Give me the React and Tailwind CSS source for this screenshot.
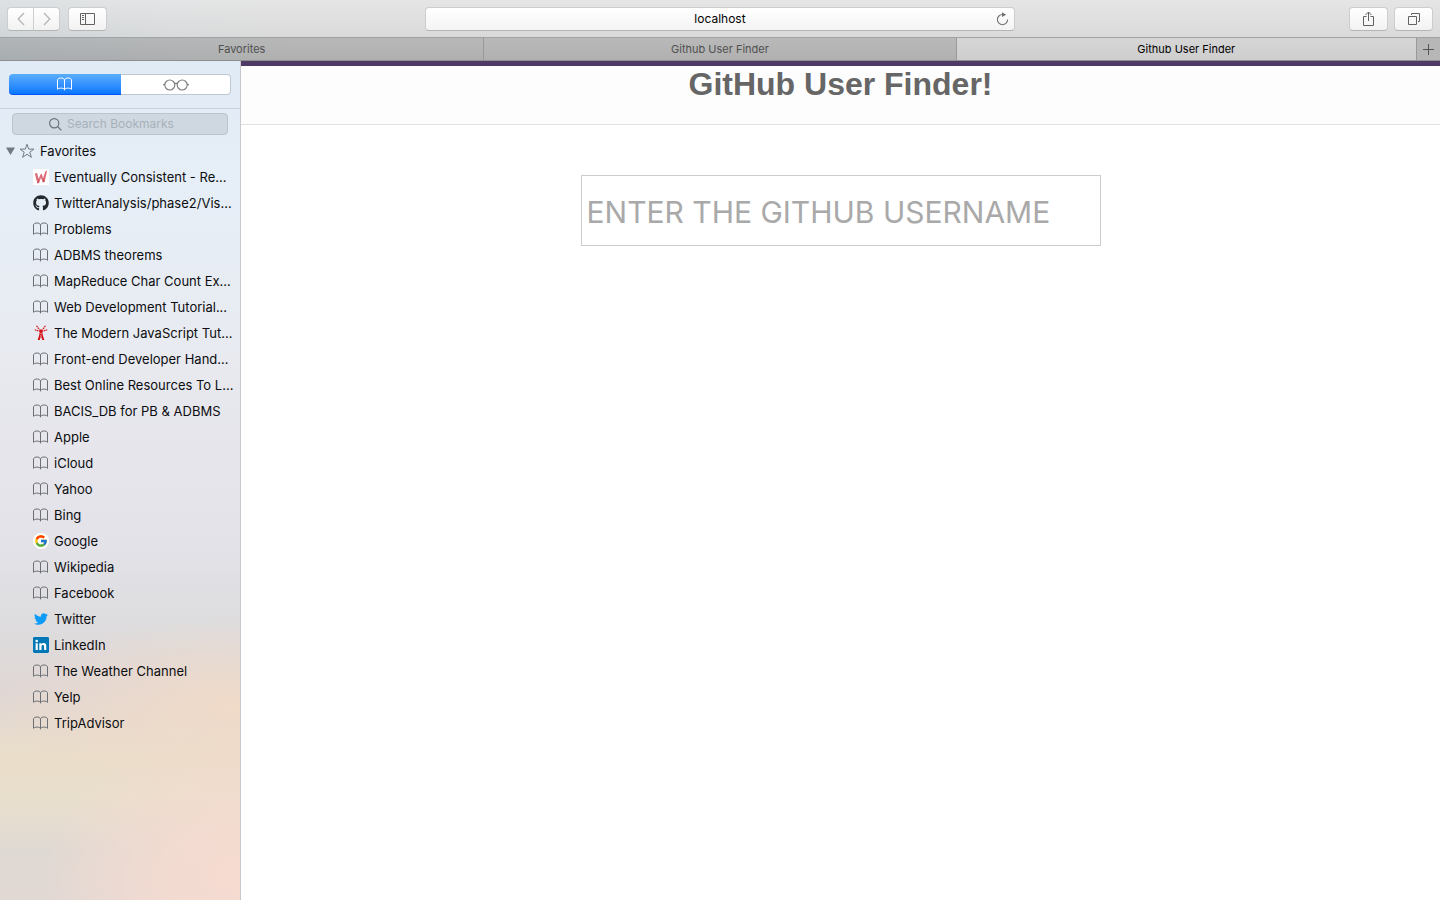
import React from "react";
import { FaGithub, FaTwitter } from "react-icons/fa";
import { FcGoogle } from "react-icons/fc";

function BookIcon({ className = "" }) {
  return (
    <svg width="16" height="14" viewBox="0 0 16 14" fill="none" stroke="currentColor" strokeLinejoin="round" className={className} aria-hidden="true">
      <path d="M7.5 2.8C6.6 1.3 5.5 1 4.1 1C2.7 1 1.3 1.3.5 2.6V12.3C1.4 11.4 2.7 11.1 4.1 11.1C5.5 11.1 6.6 11.4 7.5 12.4C8.4 11.4 9.5 11.1 10.9 11.1C12.3 11.1 13.6 11.4 14.5 12.3V2.6C13.7 1.3 12.3 1 10.9 1C9.5 1 8.4 1.3 7.5 2.8V13.4" />
    </svg>
  );
}

function GlassesIcon() {
  return (
    <svg width="26" height="12" viewBox="0 0 26 12" fill="none" stroke="currentColor" strokeWidth="1.2" aria-hidden="true">
      <circle cx="6.8" cy="6" r="5" />
      <circle cx="19.2" cy="6" r="5" />
      <path d="M11.6 4.8C12.4 4.1 13.6 4.1 14.4 4.8M1.8 5L0 6M24.2 5L26 6" />
    </svg>
  );
}

function FlameIcon() {
  return (
    <svg width="16" height="16" viewBox="0 0 16 16" aria-hidden="true">
      <rect width="16" height="16" fill="#fff" />
      <path d="M1.8 4.6L4 4L5.7 9.8L7.6 5.2L8.8 4.8L10 9.2L12.2 2.8L14.2 1.2L11.8 12.4L9.8 13.4L8 8.8L6.2 13.4L4.4 14.4Z" fill="#dc6e7a" />
      <path d="M4.4 14.4L5.7 9.8L6.2 13.4ZM9.8 13.4L10 9.2L11.8 12.4Z" fill="#cc4a5c" />
    </svg>
  );
}

function TowerIcon() {
  return (
    <svg width="16" height="16" viewBox="0 0 16 16" fill="none" stroke="#d5121a" aria-hidden="true">
      <path d="M6.2 4.6H9.8V7H9.3L9.8 10L11.3 15H9.2L8.6 12.6H7.4L6.8 15H4.7L6.2 10L6.7 7H6.2Z" fill="#d5121a" stroke="none" />
      <path d="M7.3 8.6H8.7M7 11H9" stroke="#f3c9cc" strokeWidth=".8" />
      <path d="M6 4L3.4 .6M10 4L12.6 .6M5.4 6L1.8 4.8M10.6 6L14.2 4.8" strokeWidth="1.2" strokeDasharray="1.8 .5" />
    </svg>
  );
}

function GoogleIcon() {
  return (
    <span className="flex size-4 items-center justify-center rounded-full bg-white">
      <FcGoogle size={14} />
    </span>
  );
}

function LinkedinIcon() {
  return (
    <svg width="16" height="16" viewBox="0 0 16 16" aria-hidden="true">
      <rect width="16" height="16" rx="1.4" fill="#0077b7" />
      <path d="M2.6 6.2H4.8V13H2.6ZM6.3 6.2H8.4V7.1C8.8 6.4 9.6 6 10.6 6C12.6 6 13.3 7.2 13.3 9.2V13H11.1V9.6C11.1 8.5 10.8 7.9 9.9 7.9C8.9 7.9 8.5 8.6 8.5 9.6V13H6.3Z" fill="#fff" />
      <circle cx="3.7" cy="4" r="1.3" fill="#fff" />
    </svg>
  );
}

const bookmarks = [
  ["Eventually Consistent - Re...", <FlameIcon />],
  ["TwitterAnalysis/phase2/Vis...", <FaGithub size={16} color="#24292e" />],
  ["Problems"],
  ["ADBMS theorems"],
  ["MapReduce Char Count Ex..."],
  ["Web Development Tutorial..."],
  ["The Modern JavaScript Tut...", <TowerIcon />],
  ["Front-end Developer Hand..."],
  ["Best Online Resources To L..."],
  ["BACIS_DB for PB & ADBMS"],
  ["Apple"],
  ["iCloud"],
  ["Yahoo"],
  ["Bing"],
  ["Google", <GoogleIcon />],
  ["Wikipedia"],
  ["Facebook"],
  ["Twitter", <FaTwitter size={14} color="#0d9bf9" />],
  ["LinkedIn", <LinkedinIcon />],
  ["The Weather Channel"],
  ["Yelp"],
  ["TripAdvisor"],
];

const toolButton =
  "flex h-6 items-center justify-center border border-[#cbcdce] border-b-[#b3b5b6] bg-linear-to-b from-white to-[#f2f2f2]";

function Toolbar() {
  return (
    <header className="flex h-[38px] items-center justify-between border-b border-[#9fa3a6] bg-[linear-gradient(180deg,#ffffff4d,#ffffff00),linear-gradient(90deg,#d0d5d8_0%,#d8dadb_12%,#dadada_20%)] px-[7px]">
      <div className="flex flex-1 gap-2">
        <div className="flex">
          <button aria-label="Back" className={`${toolButton} w-[27px] rounded-l`}>
            <svg width="8" height="14" viewBox="0 0 8 14" fill="none" stroke="#b5b7b8" strokeWidth="1.4"><path d="M7 1L1.2 7L7 13" /></svg>
          </button>
          <button aria-label="Forward" className={`${toolButton} w-[26px] rounded-r border-l-0`}>
            <svg width="8" height="14" viewBox="0 0 8 14" fill="none" stroke="#b5b7b8" strokeWidth="1.4"><path d="M1 1L6.8 7L1 13" /></svg>
          </button>
        </div>
        <button aria-label="Toggle sidebar" className={`${toolButton} w-[39px] rounded`}>
          <svg width="15" height="12" viewBox="0 0 15 12" fill="none" stroke="#626262"><path d="M.5 .5H14.5V11.5H.5ZM5.5 .5V11.5M2 2.5H4M2 4.5H4M2 6.5H4" /></svg>
        </button>
      </div>
      <div className="flex h-6 w-[590px] shrink items-center rounded border border-[#cbcdce] border-b-[#b3b5b6] bg-linear-to-b from-white to-[#f4f4f4] pr-1 pl-5">
        <input aria-label="Address" defaultValue="localhost" className="min-w-0 flex-1 bg-transparent text-center text-[12px] leading-4 text-black outline-none" />
        <button aria-label="Reload" className="flex size-4 items-center justify-center">
          <svg width="13" height="14" viewBox="0 0 13 14" fill="none" stroke="#727272" strokeWidth="1.1"><path d="M6.5 2.5A5.1 5.1 0 1 0 11.6 7.6" /><path d="M6 .3L10.2 2.7L6 5Z" fill="#727272" stroke="none" /></svg>
        </button>
      </div>
      <div className="flex flex-1 justify-end gap-1.5">
        <button aria-label="Share" className={`${toolButton} w-[39px] rounded`}>
          <svg width="11" height="15" viewBox="0 0 11 15" fill="none" stroke="#626262"><path d="M3.5 5.5H.5V14.5H10.5V5.5H7.5M5.5 10V1M2.5 4L5.5 1L8.5 4" /></svg>
        </button>
        <button aria-label="Show all tabs" className={`${toolButton} w-[39px] rounded`}>
          <svg width="12" height="12" viewBox="0 0 12 12" fill="none" stroke="#626262"><path d="M.5 3.5H8.5V11.5H.5ZM3.5 2V.5H11.5V8.5H10" /></svg>
        </button>
      </div>
    </header>
  );
}

function Tabs() {
  return (
    <nav aria-label="Tabs" className="flex h-[23px] border-b border-[#8e8e8e] text-[11px] leading-4">
      <button className="flex-[484_1_0%] border-r border-[#999] bg-[linear-gradient(180deg,#ffffff1a,#ffffff00),linear-gradient(90deg,#a8adb0,#b0b0b0_60%)] text-[#505050]">Favorites</button>
      <button className="flex-[472_1_0%] border-r border-[#999] bg-linear-to-b from-[#b9b9b9] to-[#b0b0b0] text-[#505050]">Github User Finder</button>
      <button className="flex-[460_1_0%] bg-linear-to-b from-[#d6d6d6] to-[#cecece] text-black">Github User Finder</button>
      <button aria-label="New tab" className="flex w-6 items-center justify-center border-l border-[#999] bg-[#b7b7b7]">
        <svg width="11" height="11" viewBox="0 0 11 11" stroke="#555"><path d="M5.5 0V11M0 5.5H11" /></svg>
      </button>
    </nav>
  );
}

function Sidebar() {
  return (
    <aside className="w-[241px] shrink-0 border-r border-[#c6c8cd] bg-[radial-gradient(ellipse_200px_140px_at_100%_97%,#f6dbd0_0%,#f6dbd0cc_40%,#f6dbd000_100%),radial-gradient(ellipse_240px_90px_at_100%_77%,#f0dac8_0%,#f0dac800_100%),linear-gradient(180deg,#e1ebf5_0%,#e6eef7_15%,#e8ebf1_33%,#e6e6ec_45%,#e2e2e8_58%,#dddcde_67%,#e0d7d5_75%,#eaddca_83%,#e9dfcd_88%,#dfd9d3_94%,#e1d8d4_100%)]">
      <div className="flex h-12 border-b border-[#c9d2dc] px-[9px] pt-[13px]">
        <div className="flex h-[21px] flex-1">
          <button aria-label="Bookmarks" className="flex w-28 items-center justify-center rounded-l border-b border-[#0a53f5] bg-linear-to-b from-[#5aaefc] to-[#0376ff] text-white">
            <BookIcon />
          </button>
          <button aria-label="Reading list" className="flex flex-1 items-center justify-center rounded-r border border-l-0 border-[#bfc8d1] bg-white text-[#808080]">
            <GlassesIcon />
          </button>
        </div>
      </div>
      <label className="mx-3 mt-1 flex h-[22px] items-center gap-[5px] rounded border border-[#bac4cd] bg-[#cfd8e0] pl-9">
        <svg width="13" height="13" viewBox="0 0 13 13" fill="none" stroke="#68717a" strokeWidth="1.2"><circle cx="5.2" cy="5.2" r="4.6" /><path d="M8.5 8.5L12.4 12.4" /></svg>
        <input aria-label="Search Bookmarks" placeholder="Search Bookmarks" className="min-w-0 flex-1 bg-transparent text-[12px] leading-4 outline-none placeholder:text-[#a7b1ba]" />
      </label>
      <div className="mt-[3px] text-[13px] leading-4 text-[#0c0d0f]">
        <h2>
          <button className="flex h-[26px] w-full items-center pl-1.5">
            <svg width="9" height="8" viewBox="0 0 9 8"><path d="M0 .5H9L4.5 8Z" fill="#717984" /></svg>
            <svg width="16" height="16" viewBox="0 0 16 16" fill="none" stroke="#727984" className="mr-[5px] ml-1"><path d="M8 1.3L9.7 6.1H15L10.8 9.2L12.4 14.3L8 11.3L3.6 14.3L5.2 9.2L1 6.1H6.3Z" /></svg>
            Favorites
          </button>
        </h2>
        <ul>
          {bookmarks.map(([title, icon]) => (
            <li key={title}>
              <a href="#" className="flex h-[26px] items-center gap-[5px] pl-[33px] whitespace-nowrap">
                <span className="flex size-4 shrink-0 items-center justify-center text-[#6b6f75]">{icon || <BookIcon />}</span>
                {title}
              </a>
            </li>
          ))}
        </ul>
      </div>
    </aside>
  );
}

export default function App() {
  return (
    <div className="flex min-h-screen flex-col bg-white font-['Inter',sans-serif]">
      <Toolbar />
      <Tabs />
      <div className="flex flex-1">
        <Sidebar />
        <main className="min-w-0 flex-1">
          <div className="h-16 border-t-[5px] border-b border-t-[#4f3a65] border-b-[#e2e2e2] bg-[#fdfdfd] text-center">
            <h1 className="font-['Liberation_Sans',sans-serif] text-[32px] leading-9 font-bold text-[#666]">GitHub User Finder!</h1>
          </div>
          <form className="flex justify-center px-6 pt-[50px]">
            <input
              aria-label="GitHub username"
              placeholder="ENTER THE GITHUB USERNAME"
              className="h-[71px] w-full max-w-[520px] border border-[#ccc] px-[5px] pt-0.5 text-[30px] outline-none placeholder:text-[#a9a9a9]"
            />
          </form>
        </main>
      </div>
    </div>
  );
}
